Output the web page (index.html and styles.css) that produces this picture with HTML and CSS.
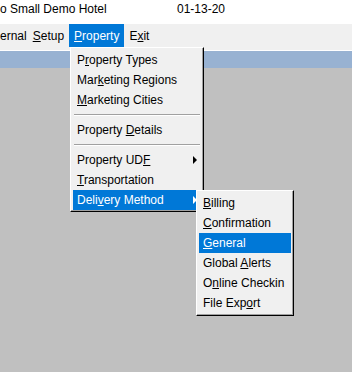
FILE: index.html
```html
<!DOCTYPE html>
<html lang="en">
<head>
  <meta charset="UTF-8">
  <title>Property menu</title>
  <link rel="stylesheet" href="styles.css">
</head>
<body>

<div class="titlebar">
  <span class="hotel">o Small Demo Hotel</span>
  <span class="date">01-13-20</span>
</div>

<div class="menubar">
  <span class="top-item first">ernal</span>
  <span class="top-item"><u>S</u>etup</span>
  <span class="top-item active"><u>P</u>roperty</span>
  <span class="top-item">E<u>x</u>it</span>
</div>

<div class="strip"></div>
<div class="workspace"></div>

<!-- Property dropdown -->
<div class="menu dropdown">
  <div class="item">P<u>r</u>operty Types</div>
  <div class="item">Mar<u>k</u>eting Regions</div>
  <div class="item"><u>M</u>arketing Cities</div>
  <div class="sep"></div>
  <div class="item">Property <u>D</u>etails</div>
  <div class="sep"></div>
  <div class="item sub">Property UD<u>F</u></div>
  <div class="item"><u>T</u>ransportation</div>
  <div class="item sub selected">Deli<u>v</u>ery Method</div>
</div>

<!-- Delivery Method submenu -->
<div class="menu submenu">
  <div class="item"><u>B</u>illing</div>
  <div class="item"><u>C</u>onfirmation</div>
  <div class="item selected"><u>G</u>eneral</div>
  <div class="item">Global <u>A</u>lerts</div>
  <div class="item">O<u>n</u>line Checkin</div>
  <div class="item">File Exp<u>o</u>rt</div>
</div>

</body>
</html>
```

FILE: styles.css
```css
body {
  margin: 0;
  width: 352px;
  height: 372px;
  overflow: hidden;
  background-color: #c0c0c0;
  font-family: 'Liberation Sans', Arial, sans-serif;
  font-size: 12px;
  color: #000;
  position: relative;
}

.titlebar {
  height: 24px;
  background-color: #fff;
  line-height: 16px;
  padding-top: 1px;
  box-sizing: border-box;
  display: flex;
}

.hotel {
  width: 177px;
}

.menubar {
  height: 24px;
  background-color: #f0f0f0;
  border-bottom: 1px solid #fff;
  padding-bottom: 2px;
  display: flex;
  overflow: hidden;
}

.top-item {
  line-height: 24px;
  height: 23px;
  padding: 0 5px;
}

.top-item.first {
  padding-left: 0;
  margin-right: -4px;
}

.top-item.active {
  background-color: #0078d7;
  color: #fff;
}

.strip {
  height: 17px;
  background-color: #98b2d2;
}

.menu {
  position: absolute;
  box-sizing: border-box;
  background-color: #f0f0f0;
  border: 1px solid;
  border-color: #fff #000 #000 #fff;
  box-shadow: inset -1px -1px #a0a0a0;
  padding: 2px;
}

.dropdown {
  left: 70px;
  top: 47px;
  width: 134px;
  height: 165px;
}

.submenu {
  left: 196px;
  top: 190px;
  width: 98px;
  height: 126px;
}

.item {
  position: relative;
  height: 20px;
  line-height: 21px;
  padding-left: 4px;
  white-space: nowrap;
}

.item.selected {
  background-color: #0078d7;
  color: #fff;
}

.item.sub::after {
  content: "";
  position: absolute;
  right: 4px;
  top: 6px;
  border-left: 4px solid #000;
  border-top: 4px solid transparent;
  border-bottom: 4px solid transparent;
}

.item.sub.selected::after {
  border-left-color: #fff;
}

.sep {
  margin: 4px 1px;
  border-top: 1px solid #a0a0a0;
  border-bottom: 1px solid #fff;
}
```
